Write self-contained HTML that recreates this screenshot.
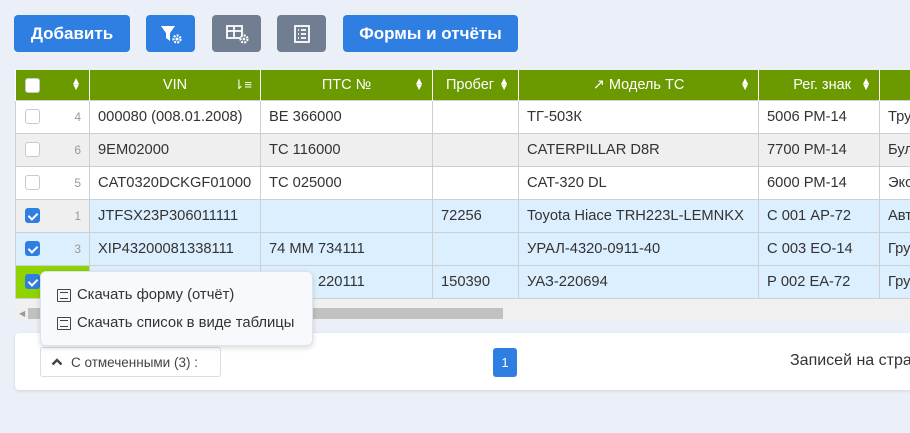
<!DOCTYPE html>
<html><head><meta charset="utf-8"><style>
*{box-sizing:border-box;margin:0;padding:0}
body{width:910px;height:433px;overflow:hidden;background:#ebf0f8;font-family:"Liberation Sans","DejaVu Sans",sans-serif;position:relative;color:#333}
.btn{position:absolute;top:15px;height:37px;border-radius:4px;color:#fff;display:flex;align-items:center;justify-content:center;font-weight:bold;font-size:17px}
.b{background:#2f7ee2}.g{background:#717e91}
table{position:absolute;left:15px;top:70px;width:925px;border-collapse:collapse;table-layout:fixed;font-size:14.7px}
td,th{border:1px solid #cfcfcf;height:33px;padding:1px 8px 0;white-space:nowrap;overflow:hidden;color:#333;font-weight:normal;background:#fff}
th{background:#6a9a00;color:#fff;height:30px;border-color:#fff;border-top:0;border-bottom:0;font-size:14.5px;position:relative}
.s{position:absolute;right:8px;top:9px;font-size:10px;line-height:6px;color:#fff}
tr.sel td{background:#dcefff}
tr.gr td{background:#efefef}
td.c{text-align:right;color:#999;font-size:12px;position:relative;background:#fff}
tr.gr td.c,tr.g2 td.c{background:#efefef}
td.grn{background:#8fd400!important}
.cb{position:absolute;left:9px;top:8px;width:15px;height:15px;border:1px solid #c4c9d2;border-radius:3px;background:#fff}
.cb.on{background:#2f7ee2;border-color:#2f7ee2}
.cb.on:after{content:"";position:absolute;left:4px;top:2px;width:4px;height:7px;border:solid #fff;border-width:0 2px 2px 0;transform:rotate(45deg)}
.menu{position:absolute;left:40px;top:271px;width:273px;height:75px;background:#f7f9fc;border:1px solid #dde3ec;border-radius:6px;box-shadow:0 2px 6px rgba(0,0,0,.15);font-size:14.8px;color:#333}
.menu div{position:absolute;left:16px;display:flex;align-items:center;gap:6px;white-space:nowrap}
.li{width:14px;height:13px;border:1.5px solid #444;border-radius:1px;position:relative}
.li:before{content:"";position:absolute;left:2px;right:2px;top:2px;height:5px;border-top:1.5px solid #444;border-bottom:1.5px solid #444}
</style></head><body>
<div class="btn b" style="left:14px;width:116px">Добавить</div>
<div class="btn b" style="left:146px;width:49px"><svg width="24" height="22" viewBox="0 0 24 22"><path d="M2 3h14l-5 7v8l-4-3v-5z" fill="#fff"/><circle cx="18" cy="16" r="3.5" fill="none" stroke="#fff" stroke-width="2.2" stroke-dasharray="2 1.2"/><circle cx="18" cy="16" r="1.5" fill="#fff"/></svg></div>
<div class="btn g" style="left:212px;width:49px"><svg width="26" height="22" viewBox="0 0 26 22"><rect x="3" y="3" width="15" height="12" fill="none" stroke="#fff" stroke-width="1.8"/><path d="M3 8h15M10 3v12" stroke="#fff" stroke-width="1.8"/><circle cx="20" cy="16" r="3.5" fill="#717e91" stroke="#fff" stroke-width="2.2" stroke-dasharray="2 1.2"/><circle cx="20" cy="16" r="1.3" fill="#fff"/></svg></div>
<div class="btn g" style="left:277px;width:49px"><svg width="20" height="20" viewBox="0 0 20 20"><rect x="3" y="2" width="14" height="16" fill="none" stroke="#fff" stroke-width="1.8"/><path d="M6 6h1M9 6h5M6 10h1M9 10h5M6 14h1M9 14h5" stroke="#fff" stroke-width="1.8"/></svg></div>
<div class="btn b" style="left:343px;width:175px">Формы и отчёты</div>

<table>
<colgroup><col style="width:74px"><col style="width:171px"><col style="width:172px"><col style="width:86px"><col style="width:240px"><col style="width:121px"><col style="width:61px"></colgroup>
<tr><th><span class="cb" style="top:8px"></span><span class="s">▲<br>▼</span></th><th>VIN<span class="s" style="font-size:13px;line-height:13px;top:8px">⇂≡</span></th><th>ПТС №<span class="s">▲<br>▼</span></th><th style="text-align:left;padding-left:13px">Пробег<span class="s" style="right:9px">▲<br>▼</span></th><th>&#x2197;&#xFE0E; Модель ТС<span class="s">▲<br>▼</span></th><th style="text-align:right;padding-right:28px">Рег. знак<span class="s">▲<br>▼</span></th><th></th></tr>
<tr><td class="c"><span class="cb"></span>4</td><td>000080 (008.01.2008)</td><td>ВЕ 366000</td><td></td><td>ТГ-503К</td><td>5006 РМ-14</td><td>Тру</td></tr>
<tr class="gr"><td class="c"><span class="cb"></span>6</td><td>9ЕМ02000</td><td>ТС 116000</td><td></td><td>CATERPILLAR D8R</td><td>7700 РМ-14</td><td>Бул</td></tr>
<tr><td class="c"><span class="cb"></span>5</td><td>CAT0320DCKGF01000</td><td>ТС 025000</td><td></td><td>CAT-320 DL</td><td>6000 РМ-14</td><td>Экс</td></tr>
<tr class="sel g2"><td class="c" style="background:#efefef"><span class="cb on"></span>1</td><td>JTFSX23P306011111</td><td></td><td>72256</td><td>Toyota Hiace TRH223L-LEMNKX</td><td>С 001 АР-72</td><td>Авт</td></tr>
<tr class="sel"><td class="c"><span class="cb on"></span>3</td><td>XIP43200081338111</td><td>74 ММ 734111</td><td></td><td>УРАЛ-4320-0911-40</td><td>С 003 ЕО-14</td><td>Гру</td></tr>
<tr class="sel"><td class="c grn"><span class="cb on"></span>2</td><td></td><td>74 ММ 220111</td><td>150390</td><td>УАЗ-220694</td><td>Р 002 ЕА-72</td><td>Гру</td></tr>
</table>
<div style="position:absolute;left:15px;top:299px;width:895px;height:22px;background:#f0f0f0"></div>
<div style="position:absolute;left:19px;top:309px;font-size:8px;color:#999">◀</div>
<div style="position:absolute;left:28px;top:308px;width:475px;height:11px;background:#c1c1c1"></div>
<div style="position:absolute;left:15px;top:333px;width:900px;height:57px;background:#fff;border-radius:4px;box-shadow:0 1px 3px rgba(0,0,0,.12)"></div>
<div style="position:absolute;left:40px;top:347px;width:181px;height:30px;border:1px solid #d5deea;border-radius:3px;background:#fff;font-size:13.5px;color:#444;display:flex;align-items:center;padding-left:10px;gap:8px;white-space:nowrap"><svg width="12" height="8" viewBox="0 0 12 8"><path d="M1.5 6.5L6 2l4.5 4.5" stroke="#444" stroke-width="2.4" fill="none"/></svg>С отмеченными (3) :</div>
<div style="position:absolute;left:493px;top:348px;width:24px;height:29px;background:#2f7ee2;border-radius:3px;color:#fff;font-size:13px;display:flex;align-items:center;justify-content:center">1</div>
<div style="position:absolute;left:790px;top:352px;font-size:16px;color:#333;white-space:nowrap">Записей на стра</div>
<div class="menu"><div style="top:15px"><span class="li"></span>Скачать форму (отчёт)</div><div style="top:43px"><span class="li"></span>Скачать список в виде таблицы</div></div>
</body></html>
